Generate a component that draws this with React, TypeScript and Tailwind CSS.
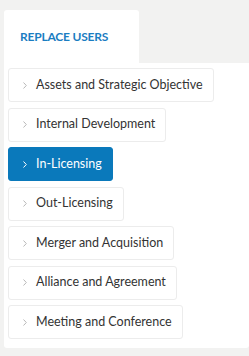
const items = [
  "Assets and Strategic Objective",
  "Internal Development",
  "In-Licensing",
  "Out-Licensing",
  "Merger and Acquisition",
  "Alliance and Agreement",
  "Meeting and Conference",
];

const ACTIVE = "In-Licensing";

function Chevron({ active }: { active: boolean }) {
  return (
    <svg width="4" height="7" viewBox="0 0 4 7" className="shrink-0">
      <path
        d="M0.5 0.5 L3.3 3.5 L0.5 6.5"
        fill="none"
        stroke={active ? "#ffffff" : "#b8b8b8"}
        strokeWidth="1"
      />
    </svg>
  );
}

export default function App() {
  return (
    <div className="min-h-[356px] w-[249px] bg-[#f2f2f1] pl-[4px] pt-[10px] font-['Lato','Liberation_Sans',sans-serif]">
      <div className="flex h-[53px] w-[135px] items-center rounded-t-[3px] bg-white pl-[16px]">
        <span className="text-[12px] font-bold tracking-[-0.2px] text-[#1b7dc2]">
          REPLACE USERS
        </span>
      </div>
      <div className="flex flex-col items-start gap-[5.5px] rounded-b-[3px] bg-white pb-[9px] pl-[4px] pt-[5px]">
        {items.map((label) => {
          const active = label === ACTIVE;
          return (
            <div
              key={label}
              className={
                active
                  ? "flex h-[34px] items-center gap-[9px] rounded-[3px] border border-[#0a79bb] bg-[#0a79bb] pl-[14px] pr-[10px] text-[12.5px] text-white"
                  : "flex h-[34px] items-center gap-[9px] rounded-[3px] border border-[#ececec] bg-white pl-[14px] pr-[10px] text-[12.5px] text-[#333333]"
              }
            >
              <Chevron active={active} />
              <span className="whitespace-nowrap">{label}</span>
            </div>
          );
        })}
      </div>
    </div>
  );
}
